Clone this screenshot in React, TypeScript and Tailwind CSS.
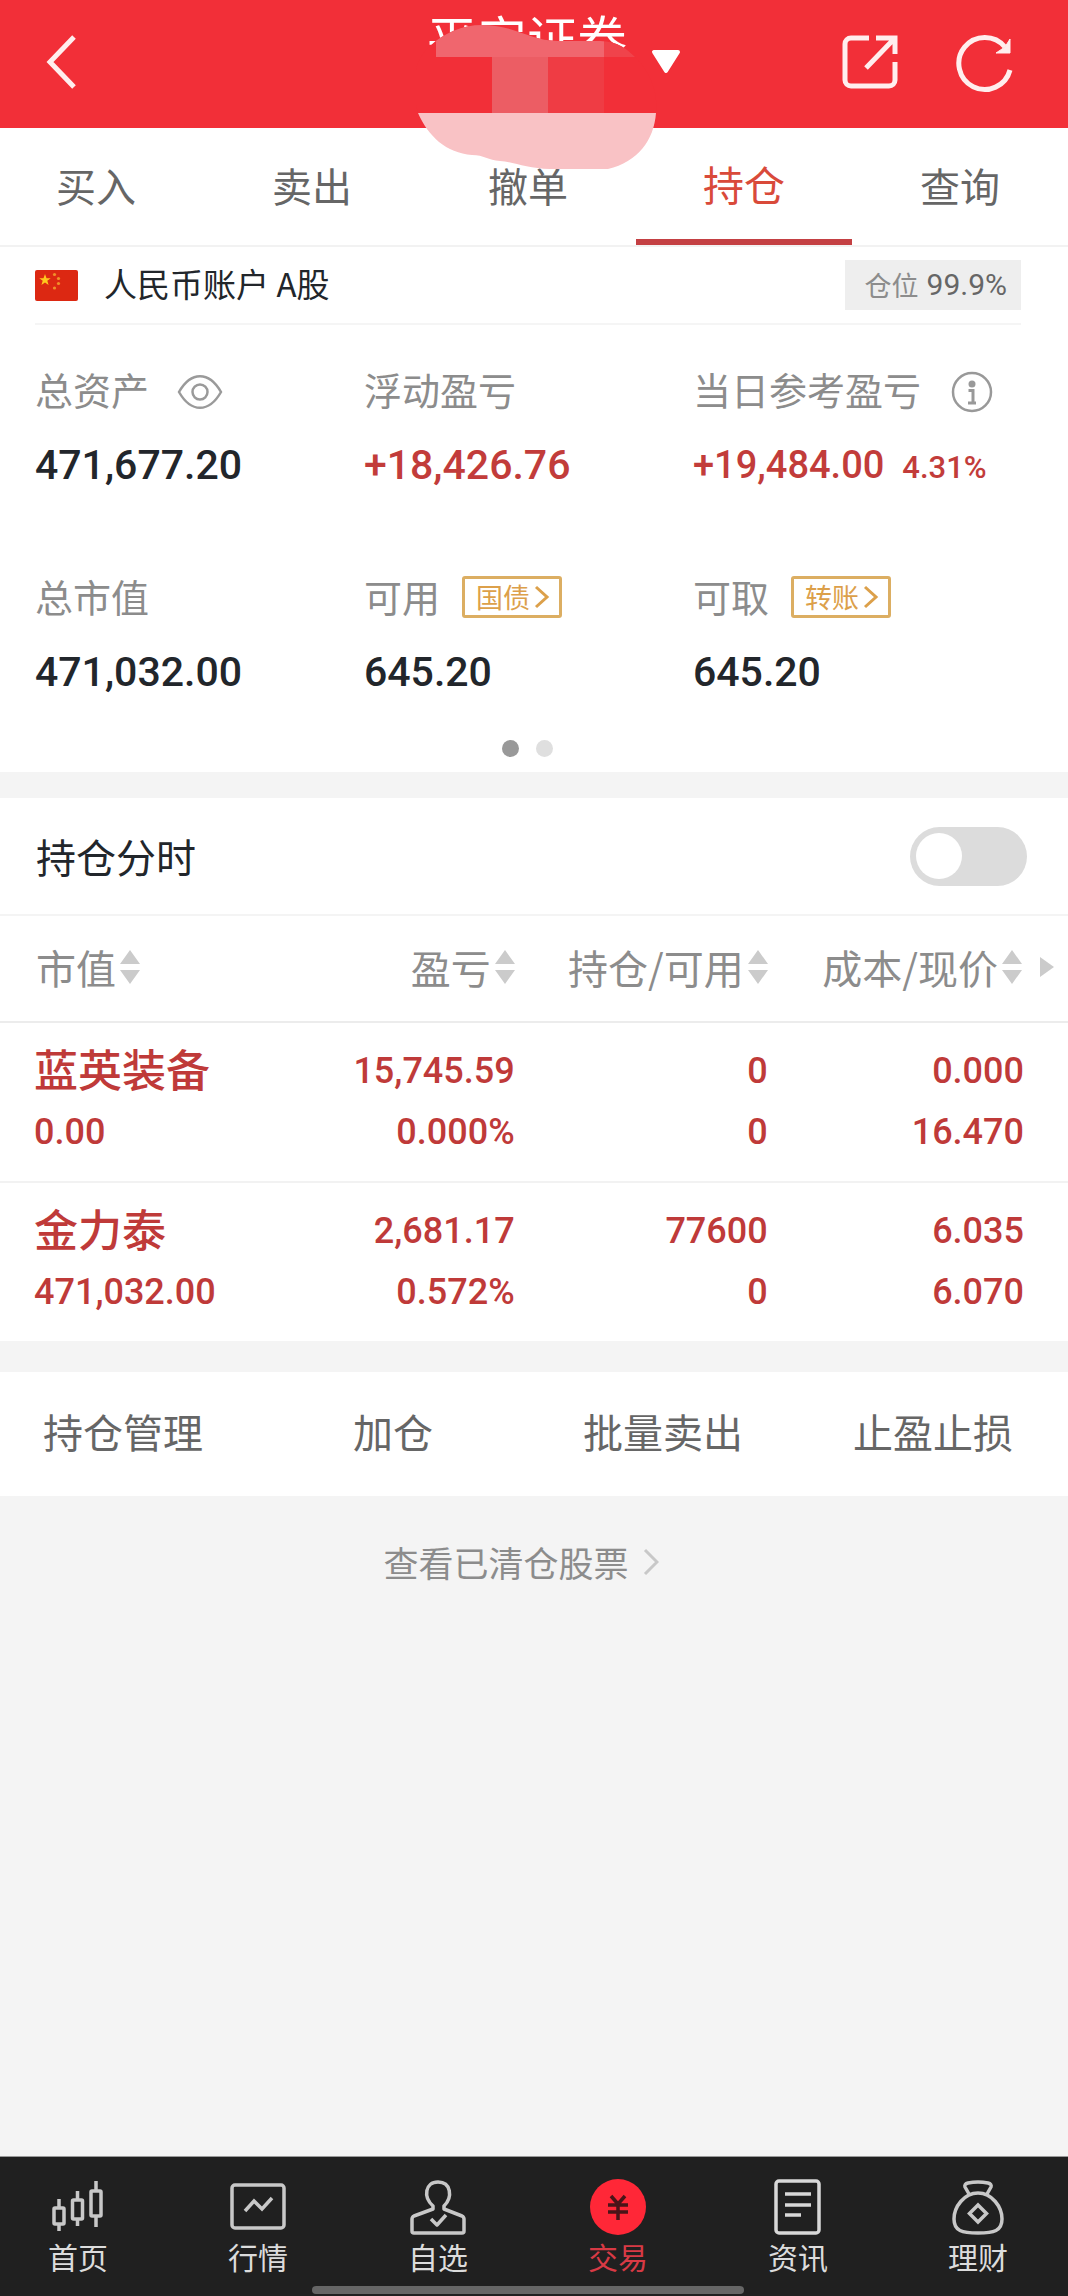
import { useState, type ReactNode } from "react";

const tabs = ["买入", "卖出", "撤单", "持仓", "查询"];
const actions = ["持仓管理", "加仓", "批量卖出", "止盈止损"];

const positions = [
  { name: "蓝英装备", value: "0.00", profit: "15,745.59", rate: "0.000%", held: "0", usable: "0", cost: "0.000", price: "16.470" },
  { name: "金力泰", value: "471,032.00", profit: "2,681.17", rate: "0.572%", held: "77600", usable: "0", cost: "6.035", price: "6.070" },
];

function BrushMark() {
  return (
    <svg className="pointer-events-none absolute left-1/2 top-6 ml-[-118px] h-[146px] w-[242px]" viewBox="416 24 242 146" aria-hidden="true">
      <clipPath id="brush">
        <path d="M418 113C410 85 414 60 430 46C444 33 462 25 482 25C515 25 530 41 558 41H600C618 41 628 50 636 58C652 74 658 95 656 113C654 140 638 162 608 169H550C528 169 514 162 500 161C488 160 484 155 472 155C446 153 428 136 418 113Z" />
      </clipPath>
      <g clipPath="url(#brush)" shapeRendering="crispEdges">
        <rect x="410" y="20" width="250" height="93" fill="#f22f38" />
        <rect x="436" y="20" width="168" height="37" fill="#f0666e" />
        <rect x="604" y="20" width="34" height="37" fill="#f0434b" />
        <rect x="492" y="57" width="56" height="56" fill="#ec5d64" />
        <rect x="548" y="57" width="56" height="56" fill="#ef3c44" />
        <rect x="410" y="113" width="250" height="60" fill="#f9c2c5" />
      </g>
    </svg>
  );
}

function Header() {
  return (
    <header className="relative z-10 flex h-32 items-center justify-between bg-[#f22f38] pl-[45px] pr-[53px] text-white">
      <button type="button" aria-label="返回" className="pb-1">
        <svg className="h-[54px] w-8" viewBox="0 0 32 54" fill="none" stroke="#ffeeee" strokeWidth="5">
          <path d="M29 2L5 27l24 25" />
        </svg>
      </button>
      <div className="flex items-center gap-[54px] pb-1">
        <button type="button" aria-label="分享">
          <svg className="h-[58px] w-[58px]" viewBox="0 0 58 58" fill="none" stroke="#ffeeee" strokeWidth="5">
            <path d="M28 5H10a6 6 0 0 0-6 6v36a6 6 0 0 0 6 6h38a6 6 0 0 0 6-6V29" />
            <path d="M35 5h19v16M53 6L25 35" />
          </svg>
        </button>
        <button type="button" aria-label="刷新">
          <svg className="h-[62px] w-[62px]" viewBox="0 0 62 62" fill="none" stroke="#ffeeee" strokeWidth="5">
            <path d="M57 39A26 26 0 1 1 52 16" />
            <path d="M57 8v14H43l9-6z" fill="#ffeeee" stroke="#ffeeee" strokeWidth="1" />
          </svg>
        </button>
      </div>
      <h1 className="absolute left-1/2 top-0 -ml-[107px] whitespace-nowrap text-[50px] leading-[72px]">平安证券</h1>
      <button type="button" aria-label="切换账户" className="absolute left-1/2 top-12 ml-[116px]">
        <svg className="h-7 w-8" viewBox="0 0 32 28">
          <path d="M4 4h24L16 23z" fill="#fff" stroke="#fff" strokeWidth="4" strokeLinejoin="round" />
        </svg>
      </button>
      <BrushMark />
    </header>
  );
}

function Flag() {
  return (
    <svg className="h-[31px] w-[43px]" viewBox="0 0 43 31" aria-hidden="true">
      <rect width="43" height="31" rx="2" fill="#dc2812" />
      <path d="M10 4l1.500 4.200h4.200l-3.400 2.600 1.300 4.200-3.600-2.600-3.600 2.600 1.300-4.200-3.400-2.600h4.200z" fill="#ffc81e" />
      <g fill="#f0902a">
        <circle cx="19.500" cy="4.500" r="1.600" />
        <circle cx="23.500" cy="8.500" r="1.600" />
        <circle cx="23.500" cy="13.500" r="1.600" />
        <circle cx="19.500" cy="18" r="1.600" />
      </g>
    </svg>
  );
}

function Stat({ label, extra, children }: { label: string; extra?: ReactNode; children: ReactNode }) {
  return (
    <div>
      <div className="flex h-14 items-center whitespace-nowrap text-[38px] leading-[56px] text-[#8c8c8c]">
        {label}
        {extra}
      </div>
      <div className="mt-5 flex h-14 items-baseline whitespace-nowrap font-[Roboto,sans-serif] text-[41px] font-medium leading-[56px] text-[#22262b]">
        {children}
      </div>
    </div>
  );
}

function TagButton({ children }: { children: string }) {
  return (
    <button type="button" className="ml-[22px] mt-0.5 flex h-[42px] items-center gap-1 rounded-[3px] border-[3px] border-[#dcae62] pl-[11px] pr-[9px] text-[27px] leading-9 text-[#dca04a]">
      {children}
      <svg className="h-6 w-4" viewBox="0 0 16 24" fill="none" stroke="#dca04a" strokeWidth="3" aria-hidden="true">
        <path d="M2 2l11 10L2 22" />
      </svg>
    </button>
  );
}

function SortHead({ children }: { children: string }) {
  return (
    <button type="button" className="inline-flex items-center gap-1 whitespace-nowrap">
      {children}
      <svg className="h-[34px] w-5" viewBox="0 0 20 34" fill="#cbcbcb" aria-hidden="true">
        <path d="M10 0l10 14H0zM10 34l10-14H0z" />
      </svg>
    </button>
  );
}

const line = { fill: "none", stroke: "#c8c8c8", strokeWidth: 3.5 };

const navItems: { label: string; icon: ReactNode }[] = [
  {
    label: "首页",
    icon: (
      <g {...line}>
        <rect x="4" y="29" width="10" height="16" rx="1" />
        <path d="M9 20v9M9 45v7M27.500 12v9M27.500 40v7M46 2v10M46 37v11" />
        <rect x="22.500" y="21" width="10" height="19" rx="1" />
        <rect x="41" y="12" width="10" height="25" rx="1" />
      </g>
    ),
  },
  {
    label: "行情",
    icon: (
      <g {...line}>
        <rect x="2" y="6" width="52" height="43" rx="3" />
        <path d="M15 32l9-10 8 8 10-11" />
      </g>
    ),
  },
  {
    label: "自选",
    icon: (
      <g {...line} strokeLinejoin="round">
        <path d="M23 30v-3C13 18 15 3 28 3s15 15 6 24v3l18 7q2 1 2 3v12q0 2-2 2H4q-2 0-2-2V40q0-2 2-3z" />
        <path d="M21 40l6 6 9-10" />
      </g>
    ),
  },
  {
    label: "交易",
    icon: (
      <g>
        <circle cx="28" cy="28" r="28" fill="#ff2737" />
        <path d="M21 17l7 8 7-8M28 24v17M18 26h20M18 33h20" fill="none" stroke="#4a1418" strokeWidth="3.500" />
      </g>
    ),
  },
  {
    label: "资讯",
    icon: (
      <g {...line} stroke="#d8d8d8">
        <rect x="6" y="2" width="43" height="52" rx="3" />
        <path d="M15 15h26M15 26h26M15 36h16" />
      </g>
    ),
  },
  {
    label: "理财",
    icon: (
      <g {...line} strokeLinejoin="round">
        <path d="M19 15l-4-7q-1-3 3-4 10-2 20 0 4 1 3 4l-4 7" />
        <path d="M28 14C14 14 4 28 4 40c0 12 8 14 24 14s24-2 24-14c0-12-10-26-24-26z" />
        <path d="M28 26l8.500 8.500L28 43l-8.500-8.500z" strokeLinejoin="miter" />
      </g>
    ),
  },
];

export default function App() {
  const [intraday, setIntraday] = useState(false);
  return (
    <div className="flex min-h-screen flex-col overflow-x-hidden bg-[#f4f4f4] font-['Noto_Sans_CJK_SC',sans-serif]">
      <Header />

      <nav className="flex h-[119px] border-b-2 border-[#f2f2f2] bg-white">
        <div className="-ml-3 flex flex-1">
          {tabs.map((tab) => (
            <a
              key={tab}
              href="#"
              aria-current={tab === "持仓" ? "page" : undefined}
              className={
                tab === "持仓"
                  ? "flex-1 border-b-[6px] border-[#c44043] text-center text-[41px] leading-[111px] text-[#d94a3a]"
                  : "flex-1 text-center text-[40px] leading-[114px] text-[#666666]"
              }
            >
              {tab}
            </a>
          ))}
        </div>
      </nav>

      <section className="bg-white pl-[35px] pr-[47px]">
        <div className="flex h-[78px] items-center border-b-2 border-[#f5f5f5]">
          <Flag />
          <h2 className="ml-[26px] pb-1 text-[33px] leading-10 text-[#22262b]">人民币账户 A股</h2>
          <p className="ml-auto flex h-[50px] items-center gap-2 bg-[#eeeeee] pl-5 pr-3.5 text-[27px] leading-[46px] text-[#8c8c8c]">
            仓位
            <span className="font-[Roboto,sans-serif] text-[30px] text-[#666666]">99.9%</span>
          </p>
        </div>

        <div className="-mr-[1px] grid grid-cols-3 gap-y-[75px] pt-9">
          <Stat
            label="总资产"
            extra={
              <button type="button" aria-label="隐藏资产" className="ml-7 mt-1.5">
                <svg className="h-9 w-[46px]" viewBox="0 0 46 36" fill="none" stroke="#9a9a9a" strokeWidth="2.500">
                  <path d="M2 18C14-3 32-3 44 18C32 39 14 39 2 18z" />
                  <circle cx="23" cy="18" r="7.500" />
                </svg>
              </button>
            }
          >
            471,677.20
          </Stat>
          <Stat label="浮动盈亏">
            <span className="text-[#c23c3a]">+18,426.76</span>
          </Stat>
          <Stat
            label="当日参考盈亏"
            extra={
              <button type="button" aria-label="说明" className="ml-[30px] mt-1.5">
                <svg className="h-[42px] w-[42px]" viewBox="0 0 42 42" fill="none" stroke="#999999" strokeWidth="2.500">
                  <circle cx="21" cy="21" r="19" />
                  <circle cx="21" cy="13" r="3.500" fill="#999999" stroke="none" />
                  <path d="M17.500 19.500H22V32M17 32h8" strokeWidth="3" />
                </svg>
              </button>
            }
          >
            <span className="text-[38px] text-[#c23c3a]">+19,484.00</span>
            <span className="ml-[18px] text-[31px] text-[#c23c3a]">4.31%</span>
          </Stat>
          <Stat label="总市值">471,032.00</Stat>
          <Stat label="可用" extra={<TagButton>国债</TagButton>}>
            645.20
          </Stat>
          <Stat label="可取" extra={<TagButton>转账</TagButton>}>
            645.20
          </Stat>
        </div>

        <div className="flex justify-center gap-[17px] pb-[15px] pr-0.5 pt-10">
          <span className="h-[17px] w-[17px] rounded-full bg-[#999999]" />
          <span className="h-[17px] w-[17px] rounded-full bg-[#dfdfdf]" />
        </div>
      </section>

      <section className="mt-[26px] bg-white">
        <label className="flex h-[118px] items-center justify-between border-b-2 border-[#f4f4f4] pl-9 pr-[41px] text-[40px] text-[#22262b]">
          持仓分时
          <input
            type="checkbox"
            role="switch"
            checked={intraday}
            onChange={(e) => setIntraday(e.target.checked)}
            className="flex h-[59px] w-[117px] appearance-none items-center rounded-full bg-[#dcdcdc] px-1.5 before:h-[46px] before:w-[46px] before:rounded-full before:bg-white checked:justify-end checked:bg-[#c44043]"
          />
        </label>

        <table className="w-full table-fixed border-collapse">
          <colgroup>
            <col className="w-[25%]" />
            <col />
            <col className="w-[253px]" />
            <col className="w-[24%]" />
            <col className="w-11" />
          </colgroup>
          <thead>
            <tr className="h-[106px] border-b-2 border-[#ececec] text-[40px] text-[#8c8c8c]">
              <th scope="col" className="pb-1 pl-9 text-left font-normal"><SortHead>市值</SortHead></th>
              <th scope="col" className="pb-1 text-right font-normal"><SortHead>盈亏</SortHead></th>
              <th scope="col" className="pb-1 text-right font-normal"><SortHead>持仓/可用</SortHead></th>
              <th scope="col" className="pb-1 pr-0.5 text-right font-normal"><SortHead>成本/现价</SortHead></th>
              <th scope="col" className="pb-1 pl-4">
                <button type="button" aria-label="更多列" className="block">
                  <svg className="h-5 w-3.5" viewBox="0 0 14 20" fill="#cbcbcb">
                    <path d="M0 0l14 10L0 20z" />
                  </svg>
                </button>
              </th>
            </tr>
          </thead>
          <tbody className="font-[Roboto,sans-serif] text-[36px] font-medium leading-[61px] text-[#bf3a39]">
            {positions.map((p) => (
              <tr key={p.name} className="border-b-2 border-[#f2f2f2] text-right last:border-b-0">
                <td className="whitespace-nowrap pb-[18px] pl-[34px] pt-4 text-left">
                  <div className="h-[63px] font-['Noto_Sans_CJK_SC',sans-serif] text-[44px] leading-[58px]">{p.name}</div>
                  <div>{p.value}</div>
                </td>
                <td className="pb-[18px] pt-[18px]"><div>{p.profit}</div><div>{p.rate}</div></td>
                <td className="pb-[18px] pt-[18px]"><div>{p.held}</div><div>{p.usable}</div></td>
                <td className="pb-[18px] pt-[18px]"><div>{p.cost}</div><div>{p.price}</div></td>
                <td />
              </tr>
            ))}
          </tbody>
        </table>
      </section>

      <section className="mt-[31px] flex bg-white">
        <div className="-ml-3 flex flex-1">
          {actions.map((a) => (
            <button key={a} type="button" className="h-[124px] flex-1 basis-0 pb-1.5 text-[40px] text-[#666666]">
              {a}
            </button>
          ))}
        </div>
      </section>

      <a href="#" className="mt-10 flex items-center justify-center gap-3.5 self-center pr-[26px] text-[35px] leading-[52px] text-[#8c8c8c]">
        查看已清仓股票
        <svg className="h-7 w-4" viewBox="0 0 16 28" fill="none" stroke="#c8c8c8" strokeWidth="3" aria-hidden="true">
          <path d="M2 2l12 12L2 26" />
        </svg>
      </a>

      <nav className="relative mt-auto flex h-[140px] border-t border-[#999999] bg-[#202020]">
        <div className="-ml-3 flex flex-1">
          {navItems.map((item) => (
            <a
              key={item.label}
              href="#"
              className={
                item.label === "交易"
                  ? "flex flex-1 flex-col items-center pt-[22px] text-[30px] leading-[42px] text-[#d83a45]"
                  : "flex flex-1 flex-col items-center pt-[22px] text-[30px] leading-[42px] text-[#dcdcdc]"
              }
            >
              <svg className="h-14 w-14" viewBox="0 0 56 56" aria-hidden="true">
                {item.icon}
              </svg>
              {item.label}
            </a>
          ))}
        </div>
        <div className="absolute bottom-0.5 left-1/2 h-2 w-[432px] -ml-[222px] rounded-full bg-[#666666]" />
      </nav>
    </div>
  );
}
